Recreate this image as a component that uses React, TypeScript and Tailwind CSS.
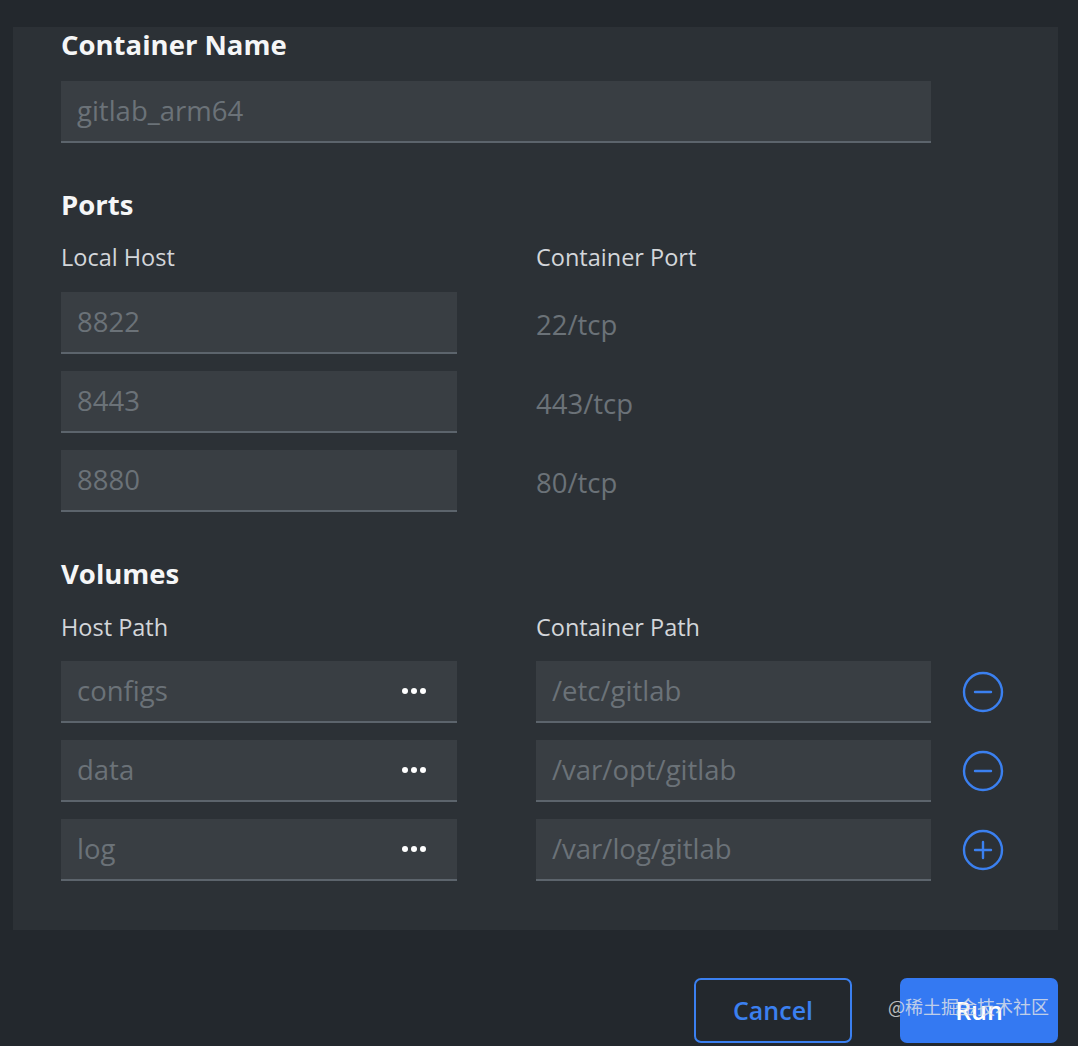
import React from 'react'

const font = { fontFamily: '"Open Sans", "Noto Sans", "Liberation Sans", sans-serif' }

const ports = [
  { host: '8822', container: '22/tcp' },
  { host: '8443', container: '443/tcp' },
  { host: '8880', container: '80/tcp' },
]

const volumes = [
  { host: 'configs', container: '/etc/gitlab', action: 'remove' },
  { host: 'data', container: '/var/opt/gitlab', action: 'remove' },
  { host: 'log', container: '/var/log/gitlab', action: 'add' },
]

const Field: React.FC<{ value: string; className?: string; dots?: boolean }> = ({ value, className = '', dots }) => (
  <div className={`h-[62px] bg-[#393e43] border-b-2 border-[#5c646c] flex items-center justify-between pl-4 pr-[31px] ${className}`}>
    <span className="text-[27.5px] text-[#6b7278] leading-none">{value}</span>
    {dots && (
      <span className="flex gap-[3px]">
        <span className="w-[6px] h-[6px] rounded-full bg-white" />
        <span className="w-[6px] h-[6px] rounded-full bg-white" />
        <span className="w-[6px] h-[6px] rounded-full bg-white" />
      </span>
    )}
  </div>
)

const CircleIcon: React.FC<{ plus?: boolean }> = ({ plus }) => (
  <svg width="42" height="42" viewBox="0 0 42 42" fill="none" stroke="#3b80f0" strokeWidth="2.4" strokeLinecap="round">
    <circle cx="21" cy="21" r="19" />
    <line x1="13" y1="21" x2="29" y2="21" />
    {plus && <line x1="21" y1="13" x2="21" y2="29" />}
  </svg>
)

const Heading: React.FC<{ children: React.ReactNode; className?: string }> = ({ children, className = '' }) => (
  <h2 className={`text-[27.5px] font-bold text-[#f5f6f7] leading-[36px] ${className}`}>{children}</h2>
)

const Label: React.FC<{ children: React.ReactNode }> = ({ children }) => (
  <div className="text-[23.5px] text-[#d3d6da] leading-[30px]">{children}</div>
)

export default function App() {
  return (
    <div className="relative w-full h-[1046px] bg-[#23282d] overflow-hidden pt-[27px] pl-[13px] pr-[20px]" style={font}>
      <div className="bg-[#2c3136] pl-[48px] pb-[49px]">
        <Heading>Container Name</Heading>
        <Field value="gitlab_arm64" className="mt-[18px] w-[870px]" />

        <Heading className="mt-[44px]">Ports</Heading>
        <div className="mt-[19px] grid grid-cols-[396px_1fr] gap-x-[79px]">
          <Label>Local Host</Label>
          <Label>Container Port</Label>
        </div>
        <div className="mt-[20px] flex flex-col gap-[17px]">
          {ports.map((p) => (
            <div key={p.host} className="grid grid-cols-[396px_1fr] gap-x-[79px] items-center">
              <Field value={p.host} />
              <span className="text-[27.5px] text-[#6b7278] pt-1">{p.container}</span>
            </div>
          ))}
        </div>

        <Heading className="mt-[44px]">Volumes</Heading>
        <div className="mt-[20px] grid grid-cols-[396px_1fr] gap-x-[79px]">
          <Label>Host Path</Label>
          <Label>Container Path</Label>
        </div>
        <div className="mt-[19px] flex flex-col gap-[17px]">
          {volumes.map((v) => (
            <div key={v.host} className="flex items-center">
              <Field value={v.host} dots className="w-[396px]" />
              <Field value={v.container} className="w-[395px] ml-[79px]" />
              <div className="ml-[31px]">
                <CircleIcon plus={v.action === 'add'} />
              </div>
            </div>
          ))}
        </div>
      </div>

      <div className="mt-[48px] flex justify-end gap-[48px]">
        <button className="w-[158px] h-[65px] rounded-[7px] border-2 border-[#3b80f0] text-[#3b80f0] text-[25px] font-semibold">
          Cancel
        </button>
        <button className="w-[158px] h-[65px] rounded-[7px] bg-[#3479f2] text-white text-[25px] font-semibold">Run</button>
      </div>

      <div
        className="absolute left-[888px] top-[993px] text-[18px] text-[#e6e6e6]/80 leading-[26px]"
        style={{ fontFamily: '"Noto Sans CJK SC", "Noto Sans", sans-serif' }}
      >
        @稀土掘金技术社区
      </div>
    </div>
  )
}
